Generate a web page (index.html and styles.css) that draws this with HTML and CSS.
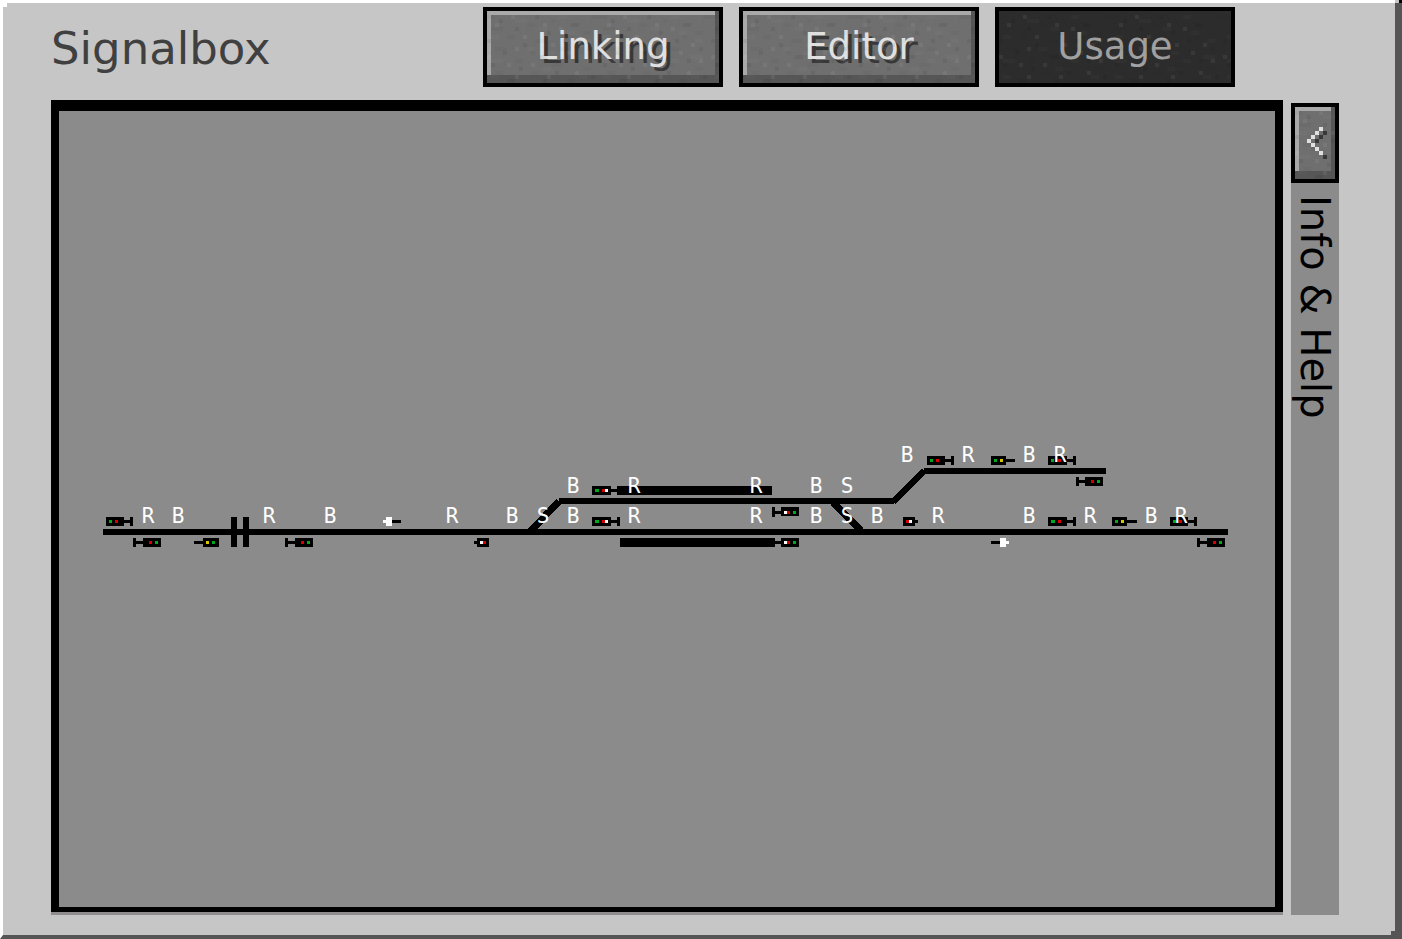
FILE: index.html
```html
<!DOCTYPE html>
<html lang="en">
<head>
<meta charset="utf-8">
<meta name="viewport" content="width=device-width, initial-scale=1">
<title>Signalbox</title>
<link rel="stylesheet" href="styles.css">
</head>
<body>
<svg class="defs" width="0" height="0" aria-hidden="true">
  <defs>
    <pattern id="grain" width="112" height="72" patternUnits="userSpaceOnUse">
      <path stroke="#000" stroke-opacity=".06" stroke-width="4" d="M12 10h4M48 6h4M84 14h8M28 18h4M60 22h4M0 30h4M36 34h4M76 30h4M100 38h4M16 42h4M52 46h8M88 50h4M4 54h4M32 58h4M68 62h4M104 66h4M20 70h8M56 70h4"/>
      <path stroke="#000" stroke-opacity=".03" stroke-width="4" d="M4 18h12M40 14h8M64 10h4M96 22h8M20 26h8M48 30h12M84 26h4M8 38h12M44 42h4M72 38h8M28 50h8M64 54h12M96 58h8M8 62h8M44 62h8M80 70h8M0 6h8M104 6h8"/>
      <path stroke="#fff" stroke-opacity=".06" stroke-width="4" d="M24 6h4M72 18h4M36 26h4M92 34h4M64 34h4M28 38h4M0 46h4M80 42h4M100 50h4M20 54h4M44 54h4M88 62h4M28 66h4M60 66h4M8 14h4M56 14h4"/>
      <path stroke="#fff" stroke-opacity=".02" stroke-width="4" d="M28 10h12M72 6h8M4 26h8M80 22h8M40 38h8M60 42h8M4 50h12M72 50h8M92 46h12M56 58h8M4 66h8M92 66h8M96 30h8M52 18h8"/>
    </pattern>
  </defs>
</svg>
<div class="window">
  <span class="notch notch-start"></span>
  <span class="notch notch-end"></span>
  <span class="corner"></span>
  <header class="header">
    <h1 class="title">Signalbox</h1>
    <nav class="modes">
      <button class="button" type="button"><svg class="grain" aria-hidden="true"><rect width="100%" height="100%" fill="url(#grain)"/></svg>Linking</button>
      <button class="button" type="button"><svg class="grain" aria-hidden="true"><rect width="100%" height="100%" fill="url(#grain)"/></svg>Editor</button>
      <button class="button" type="button" disabled><svg class="grain" aria-hidden="true"><rect width="100%" height="100%" fill="url(#grain)"/></svg>Usage</button>
    </nav>
  </header>
  <main class="content">
    <section class="board" aria-label="Track plan">
      <svg class="plan" viewBox="59 111 1216 796">
        <!-- tracks -->
        <path d="M103 529h1125v6H103zM559 498h335v6H559zM924 468h182v6H924z"/>
        <path class="diagonal" d="M530 532L559 501M893 502L924 471M833 502L862 532"/>
        <!-- level crossing -->
        <path d="M231 517h6v30h-6zM243 517h6v30h-6z"/>
        <!-- platforms -->
        <path d="M617 486h155v9H617zM620 538h155v9H620z"/>
        <!-- signal bodies -->
        <path d="M106 517h18v3h6v-3h3v9h-3v-3h-6v3h-18z
          M133 538h3v3h7v-3h18v9h-18v-3h-7v3h-3z
          M194 541h9v-3h16v9h-16v-3h-9z
          M285 538h3v3h7v-3h18v9h-18v-3h-7v3h-3z
          M392 520h9v3h-9z
          M474 541h3v-3h12v9h-12v-3h-3z
          M592 486h19v3h6v3h-6v3h-19z
          M592 517h19v3h6v-3h3v9h-3v-3h-6v3h-19z
          M772 507h3v4h6v-4h18v9h-18v-2h-6v3h-3z
          M775 541h6v-3h18v9h-18v-3h-6z
          M903 517h12v3h3v3h-3v3h-12z
          M927 456h18v3h6v-3h3v9h-3v-3h-6v3h-18z
          M991 456h15v3h9v3h-9v3h-15z
          M1048 456h19v3h6v-3h3v9h-3v-3h-6v3h-19z
          M1076 477h3v3h6v-3h18v9h-18v-3h-6v3h-3z
          M1048 517h19v3h6v-3h3v9h-3v-3h-6v3h-19z
          M1112 517h15v3h10v3h-10v3h-15z
          M1170 517h18v3h6v-3h3v9h-3v-3h-6v3h-18z
          M991 541h9v3h-9z
          M1197 538h3v3h7v-3h18v9h-18v-3h-7v3h-3z"/>
        <!-- lamps -->
        <path class="green" d="M109 520h3v3h-3zM155 541h3v3h-3zM212 541h3v3h-3zM307 541h3v3h-3zM595 489h4v3h-4zM595 520h4v3h-4zM793 511h3v3h-3zM793 541h3v3h-3zM930 459h3v3h-3zM994 459h3v3h-3zM1051 459h3v3h-3zM1097 480h3v3h-3zM1051 520h4v3h-4zM1115 520h3v3h-3zM1173 520h3v3h-3zM1219 541h3v3h-3z"/>
        <path class="red" d="M115 520h3v3h-3zM149 541h3v3h-3zM301 541h3v3h-3zM483 541h3v3h-3zM602 489h3v3h-3zM602 520h3v3h-3zM787 511h3v3h-3zM787 541h3v3h-3zM906 520h3v3h-3zM936 459h3v3h-3zM1058 459h3v3h-3zM1091 480h3v3h-3zM1058 520h3v3h-3zM1179 520h3v3h-3zM1213 541h3v3h-3z"/>
        <path class="yellow" d="M206 541h3v3h-3zM1000 459h3v3h-3zM1121 520h3v3h-3z"/>
        <path class="white" d="M383 520h3v-3h6v9h-6v-3h-3zM480 541h3v3h-3zM605 489h3v3h-3zM605 520h3v3h-3zM784 511h3v3h-3zM784 541h3v3h-3zM909 520h3v3h-3zM1000 538h6v3h3v3h-3v3h-6z"/>
        <!-- element labels -->
        <g class="label">
          <text x="907" y="462">B</text><text x="968" y="462">R</text><text x="1029" y="462">B</text><text x="1060" y="462">R</text>
          <text x="573" y="493">B</text><text x="634" y="493">R</text><text x="756" y="493">R</text><text x="816" y="493">B</text><text x="847" y="493">S</text>
          <text x="148" y="523">R</text><text x="178" y="523">B</text><text x="269" y="523">R</text><text x="330" y="523">B</text><text x="452" y="523">R</text><text x="512" y="523">B</text><text x="543" y="523">S</text><text x="573" y="523">B</text><text x="634" y="523">R</text><text x="756" y="523">R</text><text x="816" y="523">B</text><text x="847" y="523">S</text><text x="877" y="523">B</text><text x="938" y="523">R</text><text x="1029" y="523">B</text><text x="1090" y="523">R</text><text x="1151" y="523">B</text><text x="1181" y="523">R</text>
        </g>
      </svg>
    </section>
    <aside class="drawer">
      <button class="button button-narrow" type="button" aria-label="Open Info &amp; Help"><svg class="grain" aria-hidden="true"><rect width="100%" height="100%" fill="url(#grain)"/></svg><svg class="chevron" viewBox="0 0 20 32" aria-hidden="true">
        <path class="chevron-shade" d="M16 4h4v4h-4zM12 8h4v4h-4zM8 12h4v4h-4zM4 16h4v4h-4zM8 20h4v4h-4zM12 24h4v4h-4zM16 28h4v4h-4z"/>
        <path class="chevron-face" d="M12 0h4v4h-4zM8 4h4v4h-4zM4 8h4v4h-4zM0 12h4v4h-4zM4 16h4v4h-4zM8 20h4v4h-4zM12 24h4v4h-4z"/>
      </svg></button>
      <h2 class="drawer-title">Info &amp; Help</h2>
    </aside>
  </main>
</div>
</body>
</html>
```
FILE: styles.css
```css
* {
  box-sizing: border-box;
}

body {
  margin: 0;
  background: #c6c6c6;
  font-family: "DejaVu Sans", sans-serif;
}

.defs {
  position: absolute;
}

.window {
  position: relative;
  display: flex;
  flex-direction: column;
  min-height: 100vh;
  padding: 4px 56px 20px 48px;
  background: #c6c6c6;
  border-style: solid;
  border-color: #fff #555 #555 #fff;
  border-width: 3px 7px 4px 3px;
}

.notch,
.corner {
  position: absolute;
  width: 4px;
  height: 4px;
}

.notch-start {
  top: 0;
  left: 0;
  background: #fff;
}

.notch-end {
  right: 0;
  bottom: 0;
  background: #555;
}

.corner {
  top: -3px;
  right: -7px;
  width: 7px;
  height: 3px;
  background: #000;
  border-left: 4px solid #c6c6c6;
}

.header {
  display: flex;
  align-items: center;
  justify-content: space-between;
  gap: 16px;
  padding-right: 104px;
  margin-bottom: 13px;
}

.title {
  margin: 0;
  padding-top: 4px;
  color: #404040;
  font-size: 45px;
  font-weight: 400;
  line-height: 52px;
}

.modes {
  display: flex;
  gap: 16px;
}

.button {
  position: relative;
  flex: none;
  width: 240px;
  height: 80px;
  padding: 0;
  border: 4px solid #000;
  border-radius: 0;
  background: #6f6f6f;
  box-shadow: inset -4px 0 #565656, inset 0 -8px #565656, inset 4px 4px #a9a9a9;
  color: #e0e0e0;
  font: 37px/40px "DejaVu Sans", sans-serif;
  text-shadow: 4px 4px #383838;
}

.button:disabled {
  background: #2c2c2c;
  box-shadow: none;
  color: #a0a0a0;
  text-shadow: none;
}

.button-narrow {
  width: 48px;
}

.grain {
  position: absolute;
  inset: 0;
  width: 100%;
  height: 100%;
  shape-rendering: crispEdges;
}

.chevron {
  position: relative;
  display: block;
  width: 20px;
  height: 32px;
  margin: 0 8px 0 12px;
  shape-rendering: crispEdges;
}

.chevron-shade {
  fill: #383838;
}

.chevron-face {
  fill: #e0e0e0;
}

.content {
  display: flex;
  flex: 1;
  gap: 8px;
}

.board {
  display: flex;
  flex: 1;
  min-width: 0;
  margin-bottom: 3px;
  border: solid #000;
  border-width: 11px 8px 5px;
  background: #8b8b8b;
  box-shadow: 0 3px #8f8d8e;
}

.plan {
  width: 100%;
  height: 100%;
  shape-rendering: crispEdges;
}

.diagonal {
  stroke: #000;
  stroke-width: 7px;
}

.green {
  fill: #00a81c;
}

.red {
  fill: #d80000;
}

.yellow {
  fill: #d8c800;
}

.white,
.label {
  fill: #fff;
}

.label {
  font: 21px "DejaVu Sans Mono", monospace;
  text-anchor: middle;
}

.drawer {
  display: flex;
  flex: none;
  flex-direction: column;
  align-items: center;
  width: 48px;
  margin-top: 3px;
  background: #8b8b8b;
}

.drawer-title {
  margin: 12px 0 0;
  color: #000;
  font-size: 40px;
  font-weight: 400;
  line-height: 48px;
  white-space: nowrap;
  writing-mode: vertical-rl;
}
```
